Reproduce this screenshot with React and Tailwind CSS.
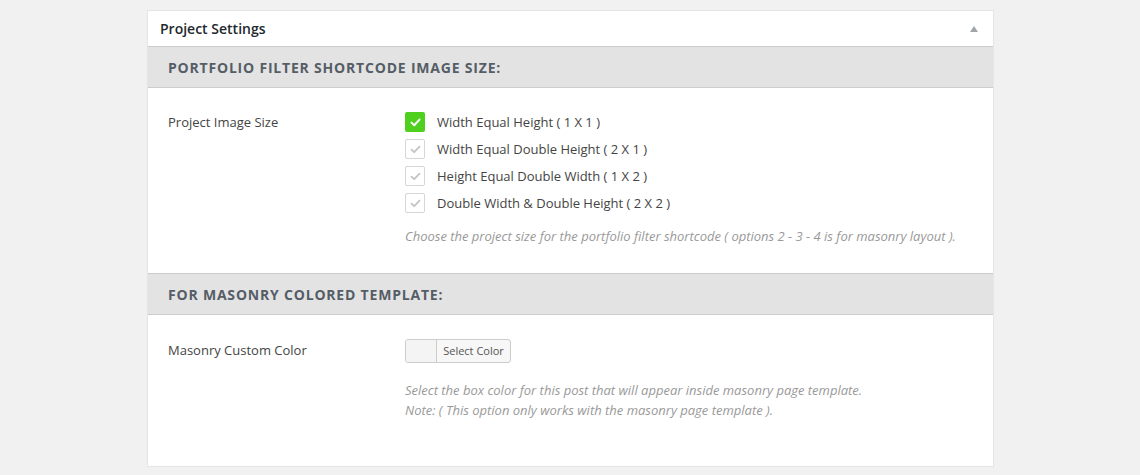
import React from "react";

function Check({ on }) {
  return on ? (
    <span className="flex h-5 w-5 items-center justify-center rounded-[2px] bg-[#4fcf1e]">
      <svg width="11" height="9" viewBox="0 0 11 9" fill="none">
        <path d="M1.5 4.6 L4.2 7.2 L9.5 1.6" stroke="#fff" strokeWidth="2" strokeLinecap="round" strokeLinejoin="round" />
      </svg>
    </span>
  ) : (
    <span className="flex h-5 w-5 items-center justify-center rounded-[2px] border border-[#d6d6d6] bg-white">
      <svg width="11" height="9" viewBox="0 0 11 9" fill="none">
        <path d="M1.5 4.6 L4.2 7.2 L9.5 1.6" stroke="#c4c4c4" strokeWidth="1.8" strokeLinecap="round" strokeLinejoin="round" />
      </svg>
    </span>
  );
}

const options = [
  ["Width Equal Height ( 1 X 1 )", true],
  ["Width Equal Double Height ( 2 X 1 )", false],
  ["Height Equal Double Width ( 1 X 2 )", false],
  ["Double Width & Double Height ( 2 X 2 )", false],
];

export default function App() {
  return (
    <div className="min-h-[475px] bg-[#f1f1f1] pt-[10px] font-['Open_Sans',sans-serif]">
      <div className="ml-[147px] w-[847px] border border-[#e5e5e5] bg-white">
        <div className="flex h-[35px] items-center justify-between pl-[12px] pr-[14px]">
          <span className="text-[14px] font-semibold text-[#23282d]">Project Settings</span>
          <svg width="10" height="8" viewBox="0 0 10 8">
            <path d="M5 1 L9 7 L1 7 Z" fill="#a0a5aa" />
          </svg>
        </div>
        <div className="flex h-[42px] items-center border-y border-[#cccccc] bg-[#e3e3e3] pl-[20px]">
          <span className="text-[14px] font-bold uppercase tracking-[0.8px] text-[#555d66]">
            Portfolio Filter Shortcode Image Size:
          </span>
        </div>
        <div className="flex pl-[20px] pt-[24px] pb-[27px]">
          <div className="w-[237px] text-[13px] leading-[20px] text-[#444]">Project Image Size</div>
          <div className="flex flex-col">
            <div className="flex flex-col gap-[7px]">
              {options.map(([label, on]) => (
                <div key={label} className="flex items-center gap-[12px]">
                  <Check on={on} />
                  <span className="text-[13px] leading-[20px] text-[#444]">{label}</span>
                </div>
              ))}
            </div>
            <p className="mt-[13px] text-[13px] italic leading-[20px] text-[#999]">
              Choose the project size for the portfolio filter shortcode ( options 2 - 3 - 4 is for masonry layout ).
            </p>
          </div>
        </div>
        <div className="flex h-[42px] items-center border-y border-[#cccccc] bg-[#e3e3e3] pl-[20px]">
          <span className="text-[14px] font-bold uppercase tracking-[0.8px] text-[#555d66]">
            For Masonry Colored Template:
          </span>
        </div>
        <div className="flex pl-[20px] pt-[24px] pb-[46px]">
          <div className="w-[237px] pt-[1px] text-[13px] leading-[20px] text-[#444]">Masonry Custom Color</div>
          <div className="flex flex-col">
            <div className="flex h-[24px] w-[106px] overflow-hidden rounded-[3px] border border-[#cccccc] bg-[#f7f7f7]">
              <span className="w-[31px] border-r border-[#cccccc] bg-[#f4f4f4]" />
              <span className="flex flex-1 items-center justify-center text-[11px] text-[#555]">Select Color</span>
            </div>
            <p className="mt-[17px] text-[13px] italic leading-[20px] text-[#999]">
              Select the box color for this post that will appear inside masonry page template.
              <br />
              Note: ( This option only works with the masonry page template ).
            </p>
          </div>
        </div>
      </div>
    </div>
  );
}
